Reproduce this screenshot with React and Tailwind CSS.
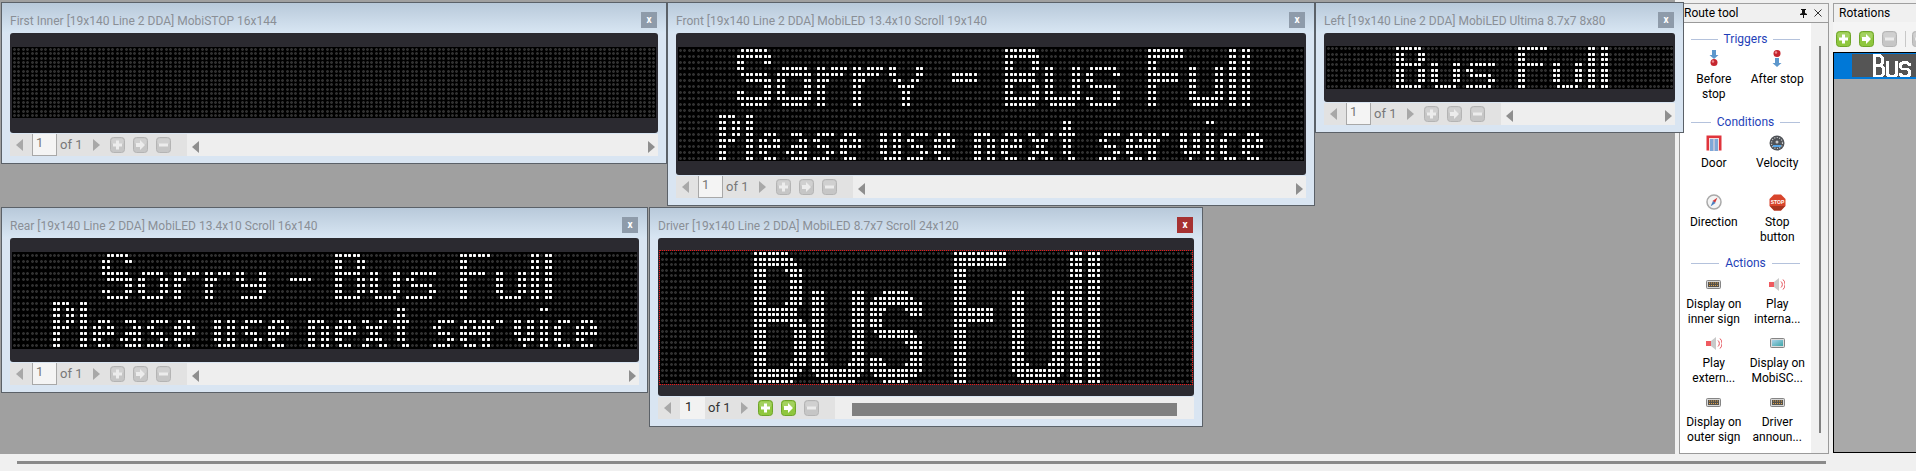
import React, { useMemo } from "react";

const makeGrid = (rows, cols) => Array.from({ length: rows }, () => new Uint8Array(cols));
const stamp = (g, glyph, r, c) =>
  glyph.forEach((line, i) => {
    for (let j = 0; j < line.length; j++) if (line[j] === "#" && g[r + i]) g[r + i][c + j] = 1;
  });
const fill = (g, r0, r1, spans) => {
  for (let r = r0; r <= r1; r++) spans.forEach(([a, b]) => { for (let c = a; c <= b; c++) g[r][c] = 1; });
};

// 10-row LED face
const L = {
  S: [".######.", "########", "##....##", "##......", ".######.", "..######", "......##", "##....##", "########", ".######."],
  o: [".######.", "########", "##....##", "##....##", "##....##", "########", ".######."],
  r: ["##.####", "######.", "###....", "##.....", "##.....", "##.....", "##....."],
  y: ["##....##", "##....##", ".##..##.", "..####..", "...##...", "...##...", "...##..."],
  B: ["#######.", "########", "##....##", "##....##", "#######.", "#######.", "##....##", "##....##", "########", "#######."],
  u: ["##....##", "##....##", "##....##", "##....##", "##....##", "########", ".######."],
  s: [".######.", "##....##", "##......", ".######.", "......##", "##....##", ".######."],
  F: ["########", "########", "##", "##", "#######", "#######", "##", "##", "##", "##"],
};
// 8-row LED face
const M = {
  S: [".#####.", "##...##", "##.....", "######.", ".######", ".....##", "##...##", ".#####."],
  o: [".#####.", "##...##", "##...##", "##...##", ".#####."],
  r: ["##.###", "###...", "##....", "##....", "##...."],
  y: ["##...##", "##...##", ".######", ".....##", ".#####."],
  B: ["######.", "##...##", "##...##", "######.", "##...##", "##...##", "##...##", "######."],
  u: ["##...##", "##...##", "##...##", "##...##", ".#####."],
  s: [".######", "##.....", ".#####.", ".....##", "######."],
  F: ["#######", "##", "##", "######", "##", "##", "##", "##"],
  l: ["##", "##", "##", "##", "##", "##", "##", "##"],
};
// lower line face
const P = {
  P: ["####.", "##.##", "##.##", "##.##", "####.", "##...", "##...", "##..."],
  l: ["##", "##", "##", "##", "##", "##", "##", "##"],
  e: [".###.", "##.##", "#####", "##...", ".###."],
  a: [".###.", "...##", ".####", "##.##", ".####"],
  s: [".####", "##...", ".###.", "...##", "####."],
  u: ["##.##", "##.##", "##.##", "##.##", ".####"],
  n: ["####.", "##.##", "##.##", "##.##", "##.##"],
  x: ["##..##", ".####.", "..##..", ".####.", "##..##"],
  t: [".##.", ".##.", "####", ".##.", ".##.", ".##.", "..##"],
  r: ["##.##", "###..", "##...", "##...", "##..."],
  v: ["##.##", "##.##", "##.##", ".####", "..#.."],
  i: ["##", "..", "##", "##", "##", "##", "##"],
  c: [".###", "##..", "##..", "##..", ".###"],
};

const lowerLine = (g, r) => {
  stamp(g, P.P, r, 9);
  stamp(g, P.l, r, 15);
  [[P.e, 18], [P.a, 24], [P.s, 30], [P.e, 36], [P.u, 45], [P.s, 51], [P.e, 57], [P.n, 66], [P.e, 72], [P.x, 78], [P.s, 94], [P.e, 100], [P.r, 105], [P.v, 112], [P.c, 121], [P.e, 126]].forEach(([gl, c]) => stamp(g, gl, r + 3, c));
  stamp(g, P.t, r + 1, 85);
  stamp(g, P.i, r + 1, 118);
};

const bmFirst = () => makeGrid(16, 144);
const bmFront = () => {
  const g = makeGrid(19, 140);
  stamp(g, L.S, 0, 13);
  [[L.o, 22], [L.r, 31], [L.r, 39], [L.y, 47], [L.u, 82], [L.s, 91], [L.u, 114]].forEach(([gl, c]) => stamp(g, gl, 3, c));
  fill(g, 4, 5, [[61, 66]]);
  stamp(g, L.B, 0, 73);
  stamp(g, L.F, 0, 105);
  fill(g, 0, 9, [[123, 124], [126, 127]]);
  lowerLine(g, 11);
  return g;
};
const bmRear = () => {
  const g = makeGrid(16, 140);
  stamp(g, M.S, 0, 20);
  [[M.o, 28], [M.r, 36], [M.r, 43], [M.y, 50], [M.u, 80], [M.s, 88], [M.u, 108]].forEach(([gl, c]) => stamp(g, gl, 3, c));
  fill(g, 4, 4, [[62, 66]]);
  stamp(g, M.B, 0, 72);
  stamp(g, M.F, 0, 100);
  stamp(g, M.l, 0, 116);
  stamp(g, M.l, 0, 119);
  lowerLine(g, 8);
  return g;
};
const bmLeft = () => {
  const g = makeGrid(8, 80);
  stamp(g, M.B, 0, 16);
  stamp(g, M.u, 3, 24);
  stamp(g, M.s, 3, 32);
  stamp(g, M.F, 0, 44);
  stamp(g, M.u, 3, 52);
  stamp(g, M.l, 0, 60);
  stamp(g, M.l, 0, 63);
  return g;
};
const bmDriver = () => {
  const g = makeGrid(24, 120);
  // B
  fill(g, 0, 0, [[21, 28]]);
  fill(g, 1, 1, [[21, 29]]);
  fill(g, 2, 2, [[21, 30]]);
  fill(g, 3, 3, [[21, 23], [28, 31]]);
  fill(g, 4, 8, [[21, 23], [29, 31]]);
  fill(g, 9, 9, [[21, 23], [28, 31]]);
  fill(g, 10, 11, [[21, 30]]);
  fill(g, 12, 12, [[21, 31]]);
  fill(g, 13, 13, [[21, 23], [29, 32]]);
  fill(g, 14, 19, [[21, 23], [30, 32]]);
  fill(g, 20, 20, [[21, 23], [29, 32]]);
  fill(g, 21, 21, [[21, 31]]);
  fill(g, 22, 22, [[21, 30]]);
  fill(g, 23, 23, [[21, 29]]);
  // u
  fill(g, 7, 19, [[34, 36], [43, 45]]);
  fill(g, 20, 20, [[34, 37], [42, 45]]);
  fill(g, 21, 21, [[34, 45]]);
  fill(g, 22, 22, [[35, 44]]);
  fill(g, 23, 23, [[36, 43]]);
  // s
  fill(g, 7, 7, [[50, 55]]);
  fill(g, 8, 8, [[48, 56]]);
  fill(g, 9, 9, [[47, 58]]);
  fill(g, 10, 10, [[47, 50], [55, 58]]);
  fill(g, 11, 11, [[47, 49], [56, 58]]);
  fill(g, 12, 13, [[47, 49]]);
  fill(g, 14, 14, [[48, 56]]);
  fill(g, 15, 15, [[49, 57]]);
  fill(g, 16, 16, [[55, 58]]);
  fill(g, 17, 18, [[56, 58]]);
  fill(g, 19, 19, [[47, 49], [56, 58]]);
  fill(g, 20, 20, [[47, 50], [55, 58]]);
  fill(g, 21, 21, [[47, 58]]);
  fill(g, 22, 22, [[48, 57]]);
  fill(g, 23, 23, [[50, 55]]);
  // F
  fill(g, 0, 2, [[66, 77]]);
  fill(g, 3, 23, [[66, 68]]);
  fill(g, 10, 12, [[66, 74]]);
  // u
  fill(g, 7, 19, [[79, 81], [88, 90]]);
  fill(g, 20, 20, [[79, 82], [87, 90]]);
  fill(g, 21, 21, [[79, 90]]);
  fill(g, 22, 22, [[80, 89]]);
  fill(g, 23, 23, [[81, 88]]);
  // ll
  fill(g, 0, 23, [[92, 94], [96, 98]]);
  return g;
};

function Dots({ grid, width, height, px, py, ox = 0 }) {
  const d = useMemo(() => {
    const dimS = [], dimP = [], litS = [], litP = [];
    grid.forEach((row, r) => {
      for (let c = 0; c < row.length; c++) {
        const x = Math.round(ox + (c + 0.5) * px - 1.5);
        const y = Math.round((r + 0.5) * py - 1.5);
        const sq = `M${x} ${y}h3v3h-3z`;
        const pl = `M${x + 1} ${y}h1v1h1v1h-1v1h-1v-1h-1v-1h1z`;
        (row[c] ? litS : dimS).push(sq);
        (row[c] ? litP : dimP).push(pl);
      }
    });
    return { dimS: dimS.join(""), dimP: dimP.join(""), litS: litS.join(""), litP: litP.join("") };
  }, [grid, px, py, ox]);
  return (
    <svg width={width} height={height} className="block" shapeRendering="crispEdges">
      <path d={d.dimS} fill="#151515" />
      <path d={d.dimP} fill="#303030" />
      <path d={d.litS} fill="#d4d4d4" />
      <path d={d.litP} fill="#ffffff" />
    </svg>
  );
}

function ToolBtn({ kind, active }) {
  const bg = active ? "#8fc73e" : "#c6c6c6";
  const edge = active ? "#6fa52a" : "#b4b4b4";
  return (
    <svg width="15" height="16" viewBox="0 0 15 16" className="block shrink-0">
      <rect x="0.5" y="0.5" width="14" height="15" rx="3" fill={bg} stroke={edge} />
      <rect x="1.5" y="1.5" width="12" height="6" rx="2" fill="#ffffff" opacity="0.18" />
      {kind === "plus" && <path d="M6 3.5h3v3h3v3H9v3H6v-3H3v-3h3z" fill={active ? "#fff" : "#ececec"} />}
      {kind === "arrow" && <path d="M3 6h4V3l5 5-5 5v-3H3z" fill={active ? "#fff" : "#ececec"} />}
      {kind === "minus" && <rect x="3" y="6.5" width="9" height="3" fill="#ececec" />}
    </svg>
  );
}

const Tri = ({ dir, color = "#a8a8a8" }) => (
  <svg width="7" height="12" viewBox="0 0 7 12" className="block">
    <path d={dir === "l" ? "M7 0v12L0 6z" : "M0 0v12l7-6z"} fill={color} />
  </svg>
);

function Toolbar({ active }) {
  return (
    <div className="flex h-[22px] mt-px bg-[#eeeeee]">
      <div className="flex items-center w-[177px] h-full bg-[#e2e2e2]">
        <div className="ml-[6px] w-[16px]"><Tri dir="l" /></div>
        {active ? (
          <div className="h-full w-[25px] bg-[#f2f2f2] pl-[5px] text-[13px] leading-[20px] text-[#222]">1</div>
        ) : (
          <div className="h-full w-[25px] bg-[#f4f4f4] border-x border-b border-[#a8a8a8] pl-[3px] text-[13px] leading-[18px] text-[#777]">1</div>
        )}
        <span className={`ml-[3px] w-[33px] text-[13px] ${active ? "text-[#333]" : "text-[#777]"}`}>of 1</span>
        <div className="w-[17px]"><Tri dir="r" /></div>
        <div className="flex gap-2">
          <ToolBtn kind="plus" active={active} />
          <ToolBtn kind="arrow" active={active} />
          <ToolBtn kind="minus" />
        </div>
      </div>
      {active ? (
        <div className="flex-1 flex items-center pl-[17px] pr-[17px]">
          <div className="w-full h-[13px] mt-[2px] bg-[#808080]" />
        </div>
      ) : (
        <div className="flex-1 flex items-center justify-between pl-[5px] pr-[3px] pt-[3px]">
          <Tri dir="l" color="#8e8e8e" />
          <Tri dir="r" color="#8e8e8e" />
        </div>
      )}
    </div>
  );
}

function Win({ pos, title, closeRed, active, grid, dotW, dotH, px, py, top, bottom, red }) {
  return (
    <div className={`absolute z-10 border border-[#5b6168] bg-[#d9e5f2] px-2 pb-[7px] ${pos}`}>
      <div className="absolute inset-x-0 top-0 h-[30px] bg-gradient-to-b from-[#b8c9da] to-[#d8e6f3]" />
      <div className="relative flex items-start justify-between h-[30px]">
        <span className="mt-[10px] text-[12px] leading-[16px] text-[#8a8f96] whitespace-nowrap">{title}</span>
        <div className={`mt-[9px] w-[16px] h-[16px] mr-px flex items-center justify-center text-[10px] leading-none font-bold text-white ${closeRed ? "bg-[#a63232]" : "bg-[#8e9baa]"}`}>x</div>
      </div>
      <div className="relative rounded-[3px] bg-[#2b2a30] px-[2px] flex flex-col" >
        <div className={top} />
        <div className={`bg-black ${red ? "outline outline-1 outline-dotted outline-[#f01414]" : ""}`}>
          <Dots grid={grid} width={dotW} height={dotH} px={px} py={py} />
        </div>
        <div className={bottom} />
      </div>
      <Toolbar active={active} />
    </div>
  );
}

const Arrow = ({ y }) => (
  <path d={`M-2 ${y}h4v5h2.5L0 ${y + 9}l-4.500-4H-2z`} fill="#5d97cc" />
);
const Ball = ({ cy }) => (
  <g>
    <circle cx="0" cy={cy} r="3.5" fill="#c5262f" />
    <circle cx="-1" cy={cy - 1} r="1.2" fill="#ee8a8f" />
  </g>
);
const BeforeIcon = () => (
  <svg width="16" height="18" viewBox="-8 0 16 18"><Arrow y={0} /><Ball cy={12.500} /></svg>
);
const AfterIcon = () => (
  <svg width="16" height="18" viewBox="-8 0 16 18"><Ball cy={3.500} /><Arrow y={8} /></svg>
);
const DoorIcon = () => (
  <svg width="16" height="16" viewBox="0 0 16 16">
    <rect x="0.5" y="0.5" width="15" height="15" fill="#e0343c" />
    <rect x="3" y="3" width="10" height="13" fill="#f6dede" />
    <rect x="4" y="4" width="3.500" height="12" fill="#7ea8d8" />
    <rect x="8.500" y="4" width="3.500" height="12" fill="#7ea8d8" />
  </svg>
);
const VelocityIcon = () => (
  <svg width="16" height="16" viewBox="0 0 16 16">
    <circle cx="8" cy="8" r="7.500" fill="#4f5257" />
    <circle cx="8" cy="8" r="5.500" fill="none" stroke="#d8d8d8" strokeWidth="1.200" strokeDasharray="1 1.500" />
    <circle cx="8" cy="7" r="1.500" fill="#c9c9c9" />
    <rect x="4" y="10" width="8" height="2" fill="#58a6e8" />
  </svg>
);
const DirectionIcon = () => (
  <svg width="16" height="16" viewBox="0 0 16 16">
    <circle cx="8" cy="8" r="7" fill="#f4f4f4" stroke="#a9a9a9" strokeWidth="1.500" />
    <path d="M11.500 3.500 9 9 6.500 7z" fill="#d23a3a" />
    <path d="M4.500 12.500 7 7 9.500 9z" fill="#4a7fc0" />
  </svg>
);
const StopIcon = () => (
  <svg width="17" height="17" viewBox="0 0 17 17">
    <path d="M5 0.500h7l4.500 4.500v7L12 16.500H5L0.500 12V5z" fill="#d8452c" />
    <path d="M5 12h7l4 0-4 4.500H5L1 12z" fill="#a8331f" />
    <text x="8.500" y="10" textAnchor="middle" fontSize="5" fontWeight="700" fill="#fff" fontFamily="Liberation Sans, sans-serif">STOP</text>
  </svg>
);
const SignIcon = () => (
  <svg width="15" height="9" viewBox="0 0 15 9">
    <rect x="0.500" y="0.500" width="14" height="8" rx="1" fill="#d6d6d6" stroke="#858585" />
    <rect x="2" y="2" width="11" height="5" fill="#55524c" />
    <path d="M3 3h9M3 5.500h9" stroke="#e2a24a" strokeWidth="1" strokeDasharray="1 1" />
  </svg>
);
const SpeakerIcon = () => (
  <svg width="16" height="15" viewBox="0 0 16 15">
    <rect x="0" y="5" width="5" height="5" fill="#ef5a60" />
    <path d="M5 5l5-4v13l-5-4z" fill="#c9c9c9" />
    <path d="M12 4.500a4 4 0 0 1 0 6M14 2.500a7 7 0 0 1 0 10" fill="none" stroke="#e4525a" strokeWidth="1" />
  </svg>
);
const ScreenIcon = () => (
  <svg width="15" height="10" viewBox="0 0 15 10">
    <defs>
      <linearGradient id="scr" x1="0" y1="0" x2="1" y2="1">
        <stop offset="0" stopColor="#a9d2ea" />
        <stop offset="1" stopColor="#3ea6a8" />
      </linearGradient>
    </defs>
    <rect x="0.500" y="0.500" width="14" height="9" rx="1" fill="#dcdcdc" stroke="#858585" />
    <rect x="2" y="2" width="11" height="6" fill="url(#scr)" />
  </svg>
);

function Item({ icon, lines }) {
  return (
    <div className="flex flex-col items-center">
      <div className="h-[25px] pb-px flex items-center justify-center">{icon}</div>
      {lines.map((t) => (
        <div key={t} className="text-[12px] leading-[15px] text-black whitespace-nowrap">{t}</div>
      ))}
    </div>
  );
}

function Heading({ children, className = "" }) {
  return (
    <div className={`flex items-center h-4 pl-[11px] pr-[11px] gap-[6px] ${className}`}>
      <div className="flex-1 h-px bg-[#b4c2dc]" />
      <span className="text-[12px] leading-4 text-[#1f3fb8]">{children}</span>
      <div className="flex-1 h-px bg-[#b4c2dc]" />
    </div>
  );
}

export default function App() {
  const first = useMemo(bmFirst, []);
  const front = useMemo(bmFront, []);
  const rear = useMemo(bmRear, []);
  const left = useMemo(bmLeft, []);
  const driver = useMemo(bmDriver, []);
  const thumb = useMemo(() => {
    const out = [];
    driver.forEach((row, r) => row.forEach((v, c) => { if (v) out.push(`M${c} ${r}h1v1h-1z`); }));
    return out.join("");
  }, [driver]);

  return (
    <div className="w-[1916px] h-[471px] flex flex-col bg-[#f0f0f0] overflow-hidden font-['Roboto',sans-serif]">
      <div className="flex h-[454px]">
        <div className="relative w-[1675px] bg-[#a0a0a0]">
          <Win pos="left-px top-[2px] w-[666px]" title="First Inner [19x140 Line 2 DDA] MobiSTOP 16x144" grid={first} dotW={644} dotH={71} px={4.472} py={4.44} top="h-[14px]" bottom="h-[15px]" />
          <Win pos="left-[667px] top-[2px] w-[648px]" title="Front [19x140 Line 2 DDA] MobiLED 13.4x10 Scroll 19x140" grid={front} dotW={626} dotH={114} px={4.472} py={6} top="h-[14px]" bottom="h-[14px]" />
          <Win pos="left-[1315px] top-[2px] w-[369px]" title="Left [19x140 Line 2 DDA] MobiLED Ultima 8.7x7 8x80" grid={left} dotW={348} dotH={43} px={4.35} py={5.375} top="h-[13px]" bottom="h-[13px]" />
          <Win pos="left-px top-[207px] w-[647px]" title="Rear [19x140 Line 2 DDA] MobiLED 13.4x10 Scroll 16x140" grid={rear} dotW={626} dotH={97} px={4.472} py={6.06} top="h-[14px]" bottom="h-[13px]" />
          <Win pos="left-[649px] top-[207px] w-[554px]" title="Driver [19x140 Line 2 DDA] MobiLED 8.7x7 Scroll 24x120" closeRed active red grid={driver} dotW={534} dotH={133} px={4.45} py={5.54} top="h-[13px]" bottom="h-[12px]" />
        </div>

        <div className="ml-[4px] w-[150px] flex flex-col pt-[3px]">
          <div className="h-[19px] flex items-center justify-between border-t border-r border-[#a0a0a0] pl-[5px] pr-[6px]">
            <span className="text-[12px] text-black">Route tool</span>
            <div className="flex items-center gap-[7px]">
              <svg width="7" height="9" viewBox="0 0 7 9"><path d="M1 0h5v1H5v3l2 1v1H4v3H3V6H0V5l2-1V1H1z" fill="#111" /></svg>
              <svg width="8" height="8" viewBox="0 0 8 8"><path d="M0.500 0.500l7 7M7.500 0.500l-7 7" stroke="#333" strokeWidth="1" /></svg>
            </div>
          </div>
          <div className="flex-1 flex border border-[#9a9a9a] bg-white">
            <div className="w-[131px] pt-[8px]">
              <Heading>Triggers</Heading>
              <div className="grid grid-cols-2 px-[2px] h-[67px]">
                <Item icon={<BeforeIcon />} lines={["Before", "stop"]} />
                <Item icon={<AfterIcon />} lines={["After stop"]} />
              </div>
              <Heading>Conditions</Heading>
              <div className="grid grid-cols-2 px-[2px] mt-px auto-rows-[59px]">
                <Item icon={<DoorIcon />} lines={["Door"]} />
                <Item icon={<VelocityIcon />} lines={["Velocity"]} />
                <Item icon={<DirectionIcon />} lines={["Direction"]} />
                <Item icon={<StopIcon />} lines={["Stop", "button"]} />
              </div>
              <Heading className="mt-[6px]">Actions</Heading>
              <div className="grid grid-cols-2 px-[2px] mt-px auto-rows-[59px]">
                <Item icon={<SignIcon />} lines={["Display on", "inner sign"]} />
                <Item icon={<SpeakerIcon />} lines={["Play", "interna..."]} />
                <Item icon={<SpeakerIcon />} lines={["Play", "extern..."]} />
                <Item icon={<ScreenIcon />} lines={["Display on", "MobiSC..."]} />
                <Item icon={<SignIcon />} lines={["Display on", "outer sign"]} />
                <Item icon={<SignIcon />} lines={["Driver", "announ..."]} />
              </div>
            </div>
            <div className="flex-1 bg-[#f0f0f0] pt-[23px] pb-[20px] flex justify-center">
              <div className="w-[2px] h-full bg-[#808080]" />
            </div>
          </div>
        </div>

        <div className="ml-[4px] flex-1 min-w-0 flex flex-col pt-[3px] pb-px">
          <div className="h-[19px] flex items-center border-t border-l border-[#a0a0a0] pl-[5px]">
            <span className="text-[12px] text-black">Rotations</span>
          </div>
          <div className="h-[30px] flex items-center pl-[3px] pt-[4px] gap-2 bg-[#f4f4f4] overflow-hidden">
            <ToolBtn kind="plus" active />
            <ToolBtn kind="arrow" active />
            <ToolBtn kind="minus" />
            <div className="w-px h-[16px] bg-[#c8c8c8] shrink-0" />
            <div className="shrink-0 -ml-[2px]"><ToolBtn kind="plus" /></div>
          </div>
          <div className="flex-1 border border-black border-r-0 bg-[#a9a9a9] overflow-hidden">
            <div className="flex h-[26px] bg-[#0078d7] pt-px pb-[2px]">
              <div className="w-[18px] shrink-0" />
              <div className="flex-1 bg-[#555555] overflow-hidden">
                <svg width="120" height="24" className="block" shapeRendering="crispEdges">
                  <path d={thumb} fill="#fff" />
                </svg>
              </div>
            </div>
          </div>
        </div>
      </div>
      <div className="flex-1 pl-[17px] pt-[7px]">
        <div className="w-[1809px] h-[3px] bg-[#8a8a8a]" />
      </div>
    </div>
  );
}
